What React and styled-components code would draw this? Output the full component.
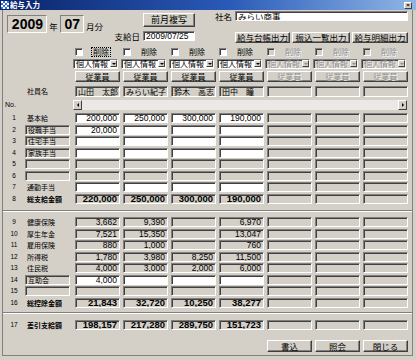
import React from 'react';
import styled, { createGlobalStyle } from 'styled-components';

const GlobalStyle = createGlobalStyle`
  html, body { margin: 0; padding: 0; background: #d4d0c8; }
  body { font-family: "Noto Sans CJK JP", "Liberation Sans", sans-serif; color: #000; }
  * { box-sizing: border-box; }
`;

const NUM = '"Liberation Sans", "Noto Sans CJK JP", sans-serif';

const Window = styled.div`
  width: 416px;
  height: 360px;
  background: #d4d0c8;
  display: flex;
  flex-direction: column;
  overflow: hidden;
`;
const TitleBar = styled.div`
  height: 10px;
  flex: none;
  display: flex;
  align-items: center;
  gap: 1px;
  padding: 0 4px 0 1px;
  background: linear-gradient(90deg, #0a246a 0%, #2a5ab8 55%, #8fb6e6 100%);
`;
const TitleText = styled.span`
  color: #fff;
  font-size: 7.5px;
  line-height: 10px;
  font-weight: bold;
`;
const CloseBtn = styled.div`
  margin-left: auto;
  width: 8px;
  height: 7px;
  background: #d4d0c8;
  border-top: 1px solid #fff;
  border-left: 1px solid #fff;
  border-right: 1px solid #404040;
  border-bottom: 1px solid #404040;
  font: bold 6px/5px ${NUM};
  text-align: center;
`;
const Body = styled.div`
  flex: 1;
  margin: 0 3px 4px 2px;
  border: 1px solid #808080;
  border-top: none;
  display: flex;
  flex-direction: column;
`;

/* header */
const Top = styled.div`
  height: 36px;
  flex: none;
  display: flex;
  padding-left: 4px;
`;
const YearMonth = styled.div`
  width: 110px;
  padding-top: 5px;
  display: flex;
  align-items: flex-start;
`;
const BigBox = styled.div`
  width: ${p => p.$w}px;
  height: 18px;
  border-top: 1px solid #808080;
  border-left: 1px solid #808080;
  border-right: 1px solid #fff;
  border-bottom: 1px solid #fff;
  font: bold 14px/16px "Liberation Sans Narrow", ${NUM};
  text-align: right;
  padding-right: 3px;
`;
const Unit = styled.span`
  font-size: 8.5px;
  line-height: 10px;
  margin-top: 6px;
  width: ${p => p.$w || 'auto'};
  text-align: center;
  padding-left: ${p => p.$pl || 0}px;
`;
const MidCol = styled.div`
  width: 78px;
  padding-top: 3px;
  display: flex;
  flex-direction: column;
  align-items: flex-end;
`;
const RightCol = styled.div`
  width: 193px;
  margin-left: 20px;
  padding-top: 1px;
  display: flex;
  flex-direction: column;
`;
const Line = styled.div`
  display: flex;
  align-items: center;
  justify-content: ${p => p.$end ? 'flex-end' : 'flex-start'};
  gap: ${p => p.$gap || 0}px;
  margin-top: ${p => p.$mt || 0}px;
`;
const Caption = styled.span`
  font-size: 8.5px;
  line-height: 10px;
  margin-right: 3px;
  white-space: nowrap;
`;
const Button = styled.div`
  width: ${p => p.$w ? `${p.$w}px` : '100%'};
  height: ${p => p.$h || 10}px;
  background: #d4d0c8;
  border-top: 1px solid #fff;
  border-left: 1px solid #fff;
  border-right: 1px solid #404040;
  border-bottom: 1px solid #404040;
  box-shadow: inset -1px -1px #808080;
  font-size: ${p => p.$fs || 8}px;
  line-height: ${p => (p.$h || 10) - 2}px;
  text-align: center;
  white-space: nowrap;
  overflow: hidden;
  color: ${p => p.$off ? '#8c8c8c' : '#000'};
  text-shadow: ${p => p.$off ? '1px 1px #fff' : 'none'};
  grid-column: ${p => p.$col || 'auto'};
`;
const Input = styled.div`
  width: ${p => p.$w ? `${p.$w}px` : 'auto'};
  flex: ${p => p.$w ? 'none' : 1};
  height: 10px;
  background: ${p => p.$gray ? '#d4d0c8' : '#fff'};
  border-top: 1px solid #808080;
  border-left: 1px solid #808080;
  border-right: 1px solid #fff;
  border-bottom: 1px solid #fff;
  box-shadow: inset 1px 1px #404040;
  font-size: 8.5px;
  line-height: 8px;
  padding-left: 2px;
  white-space: nowrap;
  overflow: hidden;
  font-family: ${p => p.$num ? NUM : 'inherit'};
`;

/* grid */
const Row = styled.div`
  flex: none;
  display: grid;
  grid-template-columns: 69px repeat(7, 45px);
  column-gap: 3px;
  height: ${p => p.$h || 10}px;
  margin-top: ${p => p.$mt || 0}px;
`;
const CheckCell = styled.div`
  display: flex;
  align-items: center;
`;
const CheckBox = styled.div`
  width: 8px;
  height: 8px;
  background: ${p => p.$off ? '#d4d0c8' : '#fff'};
  border-top: 1px solid #808080;
  border-left: 1px solid #808080;
  border-right: 1px solid #fff;
  border-bottom: 1px solid #fff;
  box-shadow: inset 1px 1px #404040;
`;
const CheckText = styled.span`
  margin-left: 9px;
  font-size: 8px;
  line-height: 8px;
  padding: 0 1px;
  outline: ${p => p.$focus ? '1px dotted #000' : 'none'};
  color: ${p => p.$off ? '#8c8c8c' : '#000'};
  text-shadow: ${p => p.$off ? '1px 1px #fff' : 'none'};
`;
const Select = styled.div`
  margin-left: -2px;
  width: 45px;
  height: 10px;
  display: flex;
  align-items: center;
  background: ${p => p.$off ? '#d4d0c8' : '#fff'};
  border-top: 1px solid #808080;
  border-left: 1px solid #808080;
  border-right: 1px solid #fff;
  border-bottom: 1px solid #fff;
  box-shadow: inset 1px 1px #404040;
  padding-left: 2px;
  font-size: 8px;
  color: ${p => p.$off ? '#8c8c8c' : '#000'};
  text-shadow: ${p => p.$off ? '1px 1px #fff' : 'none'};
`;
const Arrow = styled.div`
  margin-left: auto;
  width: 7px;
  height: 7px;
  background: #d4d0c8;
  border-top: 1px solid #fff;
  border-left: 1px solid #fff;
  border-right: 1px solid #404040;
  border-bottom: 1px solid #404040;
  display: flex;
  align-items: center;
  justify-content: center;
  &::after {
    content: '';
    border-left: 2px solid transparent;
    border-right: 2px solid transparent;
    border-top: 2px solid ${p => p.$off ? '#8c8c8c' : '#000'};
  }
`;
const LabelCell = styled.div`
  display: flex;
  align-items: center;
`;
const RowNo = styled.span`
  width: 22px;
  text-align: center;
  font: 6.5px/10px ${NUM};
`;
const RowLabel = styled.div`
  width: 45px;
  height: 10px;
  font-size: 7px;
  line-height: ${p => p.$boxed ? 8 : 10}px;
  font-weight: ${p => p.$bold ? 'bold' : 'normal'};
  padding-left: 2px;
  white-space: nowrap;
  ${p => p.$boxed && `
    border-top: 1px solid #808080;
    border-left: 1px solid #808080;
    border-right: 1px solid #fff;
    border-bottom: 1px solid #fff;
    box-shadow: inset 1px 1px #404040;
  `}
`;
const SmallLabel = styled.span`
  font-size: 7px;
  line-height: 10px;
  padding-left: ${p => p.$pl}px;
  font-family: ${p => p.$num ? NUM : 'inherit'};
`;
const Cell = styled.div`
  height: 10px;
  background: ${p => p.$white ? '#fff' : '#d4d0c8'};
  border-top: 1px solid #808080;
  border-left: 1px solid #808080;
  border-right: 1px solid #fff;
  border-bottom: 1px solid #fff;
  box-shadow: inset 1px 1px #404040;
  text-align: right;
  padding-right: 2px;
  font-family: ${NUM};
  font-size: ${p => p.$bold ? 9.5 : 8.5}px;
  font-weight: ${p => p.$bold ? 'bold' : 'normal'};
  line-height: 8px;
  white-space: nowrap;
  overflow: hidden;
`;
const NameCell = styled(Cell)`
  height: 11px;
  text-align: left;
  padding-left: 2px;
  font-family: "Noto Sans CJK JP", sans-serif;
  font-size: 8px;
  line-height: 9px;
`;
const Scroll = styled.div`
  grid-column: 2 / -1;
  margin: 0 1px 0 -2px;
  display: flex;
  justify-content: space-between;
  background-color: #ebe9e5;
`;
const ScrollBtn = styled.div`
  width: 9px;
  height: 10px;
  background: #d4d0c8;
  border-top: 1px solid #fff;
  border-left: 1px solid #fff;
  border-right: 1px solid #404040;
  border-bottom: 1px solid #404040;
  display: flex;
  align-items: center;
  justify-content: center;
  &::after {
    content: '';
    border-top: 2px solid transparent;
    border-bottom: 2px solid transparent;
    ${p => p.$right ? 'border-left: 2px solid #000;' : 'border-right: 2px solid #000;'}
  }
`;
const Separator = styled.div`
  flex: none;
  height: 2px;
  margin-top: ${p => p.$mt}px;
  border-top: 1px solid #808080;
  border-bottom: 1px solid #fff;
`;

const names = ['山田　太郎', 'みらい紀子', '鈴木　高志', '田中　瞳', '', '', ''];

const upper = [
  { no: 1, label: '基本給', white: true, vals: ['200,000', '250,000', '300,000', '190,000'] },
  { no: 2, label: '役職手当', boxed: true, white: true, vals: ['20,000'] },
  { no: 3, label: '住宅手当', boxed: true, white: true },
  { no: 4, label: '家族手当', boxed: true, white: true },
  { no: 5, label: '', boxed: true },
  { no: 6, label: '', boxed: true },
  { no: 7, label: '通勤手当', white: true },
  { no: 8, label: '総支給金額', bold: true, vals: ['220,000', '250,000', '300,000', '190,000'] },
];

const lower = [
  { no: 9, label: '健康保険', vals: ['3,662', '9,390', '', '6,970'] },
  { no: 10, label: '厚生年金', vals: ['7,521', '15,350', '', '13,047'] },
  { no: 11, label: '雇用保険', vals: ['880', '1,000', '', '760'] },
  { no: 12, label: '所得税', vals: ['1,780', '3,980', '8,250', '11,500'] },
  { no: 13, label: '住民税', vals: ['4,000', '3,000', '2,000', '6,000'] },
  { no: 14, label: '互助会', boxed: true, white: true, vals: ['4,000'] },
  { no: 15, label: '', boxed: true },
  { no: 16, label: '総控除金額', bold: true, vals: ['21,843', '32,720', '10,250', '38,277'] },
];

const total = { no: 17, label: '差引支給額', bold: true, vals: ['198,157', '217,280', '289,750', '151,723'] };

const cols = [0, 1, 2, 3, 4, 5, 6];

function DataRow({ row, mt }) {
  return (
    <Row $mt={mt}>
      <LabelCell>
        <RowNo>{row.no}</RowNo>
        <RowLabel $boxed={row.boxed} $bold={row.bold}>{row.label}</RowLabel>
      </LabelCell>
      {cols.map(i => (
        <Cell key={i} $white={row.white && i < 4} $bold={row.bold}>
          {(row.vals && row.vals[i]) || ''}
        </Cell>
      ))}
    </Row>
  );
}

function AppIcon() {
  return (
    <svg width="8" height="8" viewBox="0 0 8 8">
      <rect width="8" height="8" fill="#3b6fd0" />
      <rect x="0" y="0" width="2" height="2" fill="#fff" />
      <rect x="4" y="0" width="2" height="2" fill="#fff" />
      <rect x="2" y="2" width="2" height="2" fill="#fff" />
      <rect x="6" y="2" width="2" height="2" fill="#fff" />
      <rect x="0" y="4" width="2" height="2" fill="#fff" />
      <rect x="4" y="4" width="2" height="2" fill="#fff" />
      <rect x="2" y="6" width="2" height="2" fill="#fff" />
      <rect x="6" y="6" width="2" height="2" fill="#fff" />
    </svg>
  );
}

export default function App() {
  return (
    <Window>
      <GlobalStyle />
      <TitleBar>
        <AppIcon />
        <TitleText>給与入力</TitleText>
        <CloseBtn>×</CloseBtn>
      </TitleBar>
      <Body>
        <Top>
          <YearMonth>
            <BigBox $w={40}>2009</BigBox>
            <Unit $w="13px">年</Unit>
            <BigBox $w={24}>07</BigBox>
            <Unit $pl={2}>月分</Unit>
          </YearMonth>
          <MidCol>
            <Button $w={52} $h={14} $fs={9}>前月複写</Button>
            <Line $mt={4}>
              <Caption>支給日</Caption>
              <Input $w={52} $num>2009/07/25</Input>
            </Line>
          </MidCol>
          <RightCol>
            <Line>
              <Caption>社名</Caption>
              <Input>みらい商事</Input>
            </Line>
            <Line $end $gap={2} $mt={11}>
              <Button $w={55} $h={11} $fs={8.5}>給与台帳出力</Button>
              <Button $w={58} $h={11} $fs={8.5}>振込一覧出力</Button>
              <Button $w={56} $h={11} $fs={8.5}>給与明細出力</Button>
            </Line>
          </RightCol>
        </Top>

        <Row $h={9} $mt={1}>
          <div />
          {cols.map(i => (
            <CheckCell key={i}>
              <CheckBox $off={i > 3} />
              <CheckText $focus={i === 0} $off={i > 3}>削除</CheckText>
            </CheckCell>
          ))}
        </Row>
        <Row $h={10} $mt={2.5}>
          <div />
          {cols.map(i => (
            <Select key={i} $off={i > 3}>
              個人情報<Arrow $off={i > 3} />
            </Select>
          ))}
        </Row>
        <Row $h={11} $mt={2.5}>
          <div />
          {cols.map(i => (
            <Button key={i} $h={11} $off={i > 3}>従業員</Button>
          ))}
        </Row>
        <Row $h={11} $mt={4}>
          <SmallLabel $pl={24}>社員名</SmallLabel>
          {names.map((n, i) => (
            <NameCell key={i}>{n}</NameCell>
          ))}
        </Row>
        <Row $h={10} $mt={3}>
          <SmallLabel $pl={2} $num>No.</SmallLabel>
          <Scroll>
            <ScrollBtn />
            <ScrollBtn $right />
          </Scroll>
        </Row>

        {upper.map((r, i) => (
          <DataRow key={r.no} row={r} mt={i === 0 ? 3 : 1.5} />
        ))}
        <Separator $mt={6} />
        {lower.map((r, i) => (
          <DataRow key={r.no} row={r} mt={i === 0 ? 5.5 : 1.5} />
        ))}
        <Separator $mt={4.5} />
        <DataRow row={total} mt={6} />

        <Row $h={12} $mt={10}>
          <Button $col={6} $h={12} $fs={8.5}>書込</Button>
          <Button $col={7} $h={12} $fs={8.5}>照会</Button>
          <Button $col={8} $h={12} $fs={8.5}>閉じる</Button>
        </Row>
      </Body>
    </Window>
  );
}
